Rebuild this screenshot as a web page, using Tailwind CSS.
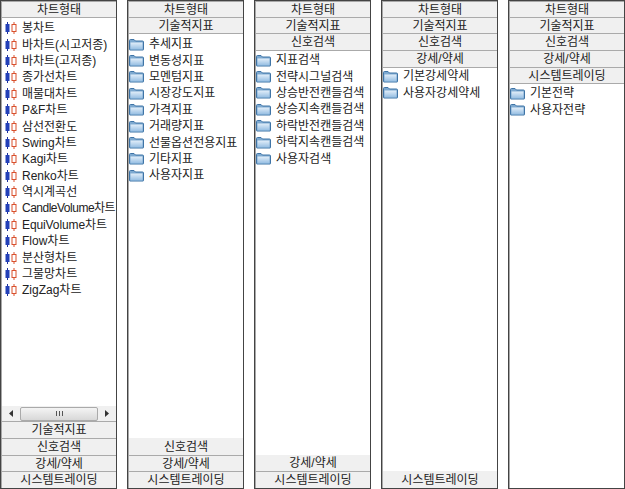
<!DOCTYPE html>
<html lang="ko">
<head>
<meta charset="UTF-8">
<title>차트형태</title>
<script src="https://cdn.jsdelivr.net/npm/@tailwindcss/browser@4"></script>
</head>
<body class="bg-white w-[625px] h-[489px] overflow-hidden text-[12px] leading-none text-[#222] font-['Liberation_Sans','Noto_Sans_CJK_KR',sans-serif]">
<svg class="block w-0 h-0">
  <defs>
    <linearGradient id="folderFill" x1="0" y1="0" x2="0" y2="1">
      <stop offset="0" stop-color="#e2eef9"/>
      <stop offset="1" stop-color="#94bde2"/>
    </linearGradient>
  </defs>
  <symbol id="candle" viewBox="0 0 12 12">
    <path d="M2.500 0v12" stroke="#1c2f9c" fill="none"/><rect x="0.500" y="2" width="4" height="8" fill="#2340b8"/>
    <path d="M9 0v2.500M9 9.500v2.500" stroke="#d9502c" fill="none"/><rect x="7" y="2.500" width="4" height="7" fill="#fff" stroke="#d9502c"/>
  </symbol>
  <symbol id="folder" viewBox="0 0 15 13">
    <path d="M.5 11.500V2.500q0-1 1-1h3.500l1.500 1.500h7q1 0 1 1v7.500q0 .5-.5.5h-13q-.5 0-.5-.5z" fill="#7da9d0" stroke="#3f74a6"/>
    <path d="M1.500 4.500h12v7h-12z" fill="url(#folderFill)"/>
  </symbol>
</svg>
<div class="flex gap-[10px] h-[489px]">

  <div class="w-[117px] h-[489px] border border-[#444]">
    <div class="h-full flex flex-col border-l border-t border-[#a8a8a8]">
      <div class="h-[16px] shrink-0 flex items-center justify-center bg-[#f0f0f0] border-b border-[#aaa]">차트형태</div>
      <div class="flex-1 pt-[2px] pl-[3px] overflow-hidden">
        <div class="h-[16.4px] flex items-center gap-[5px] whitespace-nowrap"><svg class="w-[12px] h-[12px] shrink-0"><use href="#candle"/></svg>봉차트</div>
        <div class="h-[16.4px] flex items-center gap-[5px] whitespace-nowrap"><svg class="w-[12px] h-[12px] shrink-0"><use href="#candle"/></svg>바차트(시고저종)</div>
        <div class="h-[16.4px] flex items-center gap-[5px] whitespace-nowrap"><svg class="w-[12px] h-[12px] shrink-0"><use href="#candle"/></svg>바차트(고저종)</div>
        <div class="h-[16.4px] flex items-center gap-[5px] whitespace-nowrap"><svg class="w-[12px] h-[12px] shrink-0"><use href="#candle"/></svg>종가선차트</div>
        <div class="h-[16.4px] flex items-center gap-[5px] whitespace-nowrap"><svg class="w-[12px] h-[12px] shrink-0"><use href="#candle"/></svg>매물대차트</div>
        <div class="h-[16.4px] flex items-center gap-[5px] whitespace-nowrap"><svg class="w-[12px] h-[12px] shrink-0"><use href="#candle"/></svg>P&amp;F차트</div>
        <div class="h-[16.4px] flex items-center gap-[5px] whitespace-nowrap"><svg class="w-[12px] h-[12px] shrink-0"><use href="#candle"/></svg>삼선전환도</div>
        <div class="h-[16.4px] flex items-center gap-[5px] whitespace-nowrap"><svg class="w-[12px] h-[12px] shrink-0"><use href="#candle"/></svg>Swing차트</div>
        <div class="h-[16.4px] flex items-center gap-[5px] whitespace-nowrap"><svg class="w-[12px] h-[12px] shrink-0"><use href="#candle"/></svg>Kagi차트</div>
        <div class="h-[16.4px] flex items-center gap-[5px] whitespace-nowrap"><svg class="w-[12px] h-[12px] shrink-0"><use href="#candle"/></svg>Renko차트</div>
        <div class="h-[16.4px] flex items-center gap-[5px] whitespace-nowrap"><svg class="w-[12px] h-[12px] shrink-0"><use href="#candle"/></svg>역시계곡선</div>
        <div class="h-[16.4px] flex items-center gap-[5px] whitespace-nowrap tracking-[-0.5px]"><svg class="w-[12px] h-[12px] shrink-0"><use href="#candle"/></svg>CandleVolume차트</div>
        <div class="h-[16.4px] flex items-center gap-[5px] whitespace-nowrap tracking-[-0.1px]"><svg class="w-[12px] h-[12px] shrink-0"><use href="#candle"/></svg>EquiVolume차트</div>
        <div class="h-[16.4px] flex items-center gap-[5px] whitespace-nowrap"><svg class="w-[12px] h-[12px] shrink-0"><use href="#candle"/></svg>Flow차트</div>
        <div class="h-[16.4px] flex items-center gap-[5px] whitespace-nowrap"><svg class="w-[12px] h-[12px] shrink-0"><use href="#candle"/></svg>분산형차트</div>
        <div class="h-[16.4px] flex items-center gap-[5px] whitespace-nowrap"><svg class="w-[12px] h-[12px] shrink-0"><use href="#candle"/></svg>그물망차트</div>
        <div class="h-[16.4px] flex items-center gap-[5px] whitespace-nowrap"><svg class="w-[12px] h-[12px] shrink-0"><use href="#candle"/></svg>ZigZag차트</div>
      </div>
      <!-- horizontal scrollbar -->
      <div class="h-[15px] shrink-0 flex items-center bg-[#f0f0f0]">
        <div class="w-[18px] flex justify-center"><svg class="w-[4px] h-[7px]" viewBox="0 0 4 7"><path d="M4 0v7L0 3.500z" fill="#333"/></svg></div>
        <div class="flex-1 h-[14px] flex items-center justify-center rounded-[2px] border border-[#aaa] bg-gradient-to-b from-[#f4f4f4] to-[#d8d8d8]"><svg class="w-[7px] h-[5px]" viewBox="0 0 7 5"><path d="M.5 0v5M3.500 0v5M6.500 0v5" stroke="#555" fill="none"/></svg></div>
        <div class="w-[18px] flex justify-center"><svg class="w-[4px] h-[7px]" viewBox="0 0 4 7"><path d="M0 0v7L4 3.500z" fill="#333"/></svg></div>
      </div>
      <div class="h-[17px] shrink-0 flex items-center justify-center bg-[#f0f0f0] border-t border-[#aaa]">기술적지표</div>
      <div class="h-[17px] shrink-0 flex items-center justify-center bg-[#f0f0f0] border-t border-[#aaa]">신호검색</div>
      <div class="h-[16px] shrink-0 flex items-center justify-center bg-[#f0f0f0] border-t border-[#aaa]">강세/약세</div>
      <div class="h-[17px] shrink-0 flex items-center justify-center bg-[#f0f0f0] border-t border-[#aaa]">시스템트레이딩</div>
    </div>
  </div>

  <div class="w-[117px] h-[489px] border border-[#444]">
    <div class="h-full flex flex-col border-l border-t border-[#a8a8a8]">
      <div class="h-[16px] shrink-0 flex items-center justify-center bg-[#f0f0f0] border-b border-[#aaa]">차트형태</div>
      <div class="h-[16px] shrink-0 flex items-center justify-center bg-[#f0f0f0] border-b border-[#aaa]">기술적지표</div>
      <div class="flex-1 pt-[2px] overflow-hidden">
        <div class="h-[16.4px] flex items-center gap-[5px] whitespace-nowrap"><svg class="w-[15px] h-[13px] shrink-0"><use href="#folder"/></svg>추세지표</div>
        <div class="h-[16.4px] flex items-center gap-[5px] whitespace-nowrap"><svg class="w-[15px] h-[13px] shrink-0"><use href="#folder"/></svg>변동성지표</div>
        <div class="h-[16.4px] flex items-center gap-[5px] whitespace-nowrap"><svg class="w-[15px] h-[13px] shrink-0"><use href="#folder"/></svg>모멘텀지표</div>
        <div class="h-[16.4px] flex items-center gap-[5px] whitespace-nowrap"><svg class="w-[15px] h-[13px] shrink-0"><use href="#folder"/></svg>시장강도지표</div>
        <div class="h-[16.4px] flex items-center gap-[5px] whitespace-nowrap"><svg class="w-[15px] h-[13px] shrink-0"><use href="#folder"/></svg>가격지표</div>
        <div class="h-[16.4px] flex items-center gap-[5px] whitespace-nowrap"><svg class="w-[15px] h-[13px] shrink-0"><use href="#folder"/></svg>거래량지표</div>
        <div class="h-[16.4px] flex items-center gap-[5px] whitespace-nowrap"><svg class="w-[15px] h-[13px] shrink-0"><use href="#folder"/></svg>선물옵션전용지표</div>
        <div class="h-[16.4px] flex items-center gap-[5px] whitespace-nowrap"><svg class="w-[15px] h-[13px] shrink-0"><use href="#folder"/></svg>기타지표</div>
        <div class="h-[16.4px] flex items-center gap-[5px] whitespace-nowrap"><svg class="w-[15px] h-[13px] shrink-0"><use href="#folder"/></svg>사용자지표</div>
      </div>
      <div class="h-[17px] shrink-0 flex items-center justify-center bg-[#f0f0f0]">신호검색</div>
      <div class="h-[16px] shrink-0 flex items-center justify-center bg-[#f0f0f0] border-t border-[#aaa]">강세/약세</div>
      <div class="h-[17px] shrink-0 flex items-center justify-center bg-[#f0f0f0] border-t border-[#aaa]">시스템트레이딩</div>
    </div>
  </div>

  <div class="w-[117px] h-[489px] border border-[#444]">
    <div class="h-full flex flex-col border-l border-t border-[#a8a8a8]">
      <div class="h-[16px] shrink-0 flex items-center justify-center bg-[#f0f0f0] border-b border-[#aaa]">차트형태</div>
      <div class="h-[16px] shrink-0 flex items-center justify-center bg-[#f0f0f0] border-b border-[#aaa]">기술적지표</div>
      <div class="h-[17px] shrink-0 flex items-center justify-center bg-[#f0f0f0] border-b border-[#aaa]">신호검색</div>
      <div class="flex-1 pt-[1px] overflow-hidden">
        <div class="h-[16.4px] flex items-center gap-[5px] whitespace-nowrap"><svg class="w-[15px] h-[13px] shrink-0"><use href="#folder"/></svg>지표검색</div>
        <div class="h-[16.4px] flex items-center gap-[5px] whitespace-nowrap"><svg class="w-[15px] h-[13px] shrink-0"><use href="#folder"/></svg>전략시그널검색</div>
        <div class="h-[16.4px] flex items-center gap-[5px] whitespace-nowrap"><svg class="w-[15px] h-[13px] shrink-0"><use href="#folder"/></svg>상승반전캔들검색</div>
        <div class="h-[16.4px] flex items-center gap-[5px] whitespace-nowrap"><svg class="w-[15px] h-[13px] shrink-0"><use href="#folder"/></svg>상승지속캔들검색</div>
        <div class="h-[16.4px] flex items-center gap-[5px] whitespace-nowrap"><svg class="w-[15px] h-[13px] shrink-0"><use href="#folder"/></svg>하락반전캔들검색</div>
        <div class="h-[16.4px] flex items-center gap-[5px] whitespace-nowrap"><svg class="w-[15px] h-[13px] shrink-0"><use href="#folder"/></svg>하락지속캔들검색</div>
        <div class="h-[16.4px] flex items-center gap-[5px] whitespace-nowrap"><svg class="w-[15px] h-[13px] shrink-0"><use href="#folder"/></svg>사용자검색</div>
      </div>
      <div class="h-[16px] shrink-0 flex items-center justify-center bg-[#f0f0f0]">강세/약세</div>
      <div class="h-[17px] shrink-0 flex items-center justify-center bg-[#f0f0f0] border-t border-[#aaa]">시스템트레이딩</div>
    </div>
  </div>

  <div class="w-[117px] h-[489px] border border-[#444]">
    <div class="h-full flex flex-col border-l border-t border-[#a8a8a8]">
      <div class="h-[16px] shrink-0 flex items-center justify-center bg-[#f0f0f0] border-b border-[#aaa]">차트형태</div>
      <div class="h-[16px] shrink-0 flex items-center justify-center bg-[#f0f0f0] border-b border-[#aaa]">기술적지표</div>
      <div class="h-[17px] shrink-0 flex items-center justify-center bg-[#f0f0f0] border-b border-[#aaa]">신호검색</div>
      <div class="h-[17px] shrink-0 flex items-center justify-center bg-[#f0f0f0] border-b border-[#aaa]">강세/약세</div>
      <div class="flex-1 overflow-hidden">
        <div class="h-[16.4px] flex items-center gap-[5px] whitespace-nowrap"><svg class="w-[15px] h-[13px] shrink-0"><use href="#folder"/></svg>기본강세약세</div>
        <div class="h-[16.4px] flex items-center gap-[5px] whitespace-nowrap"><svg class="w-[15px] h-[13px] shrink-0"><use href="#folder"/></svg>사용자강세약세</div>
      </div>
      <div class="h-[17px] shrink-0 flex items-center justify-center bg-[#f0f0f0]">시스템트레이딩</div>
    </div>
  </div>

  <div class="w-[117px] h-[489px] border border-[#444]">
    <div class="h-full flex flex-col border-l border-t border-[#a8a8a8]">
      <div class="h-[16px] shrink-0 flex items-center justify-center bg-[#f0f0f0] border-b border-[#aaa]">차트형태</div>
      <div class="h-[16px] shrink-0 flex items-center justify-center bg-[#f0f0f0] border-b border-[#aaa]">기술적지표</div>
      <div class="h-[17px] shrink-0 flex items-center justify-center bg-[#f0f0f0] border-b border-[#aaa]">신호검색</div>
      <div class="h-[17px] shrink-0 flex items-center justify-center bg-[#f0f0f0] border-b border-[#aaa]">강세/약세</div>
      <div class="h-[16px] shrink-0 flex items-center justify-center bg-[#f0f0f0] border-b border-[#aaa]">시스템트레이딩</div>
      <div class="flex-1 pt-[1px] overflow-hidden">
        <div class="h-[16.4px] flex items-center gap-[5px] whitespace-nowrap"><svg class="w-[15px] h-[13px] shrink-0"><use href="#folder"/></svg>기본전략</div>
        <div class="h-[16.4px] flex items-center gap-[5px] whitespace-nowrap"><svg class="w-[15px] h-[13px] shrink-0"><use href="#folder"/></svg>사용자전략</div>
      </div>
    </div>
  </div>

</div>
</body>
</html>
